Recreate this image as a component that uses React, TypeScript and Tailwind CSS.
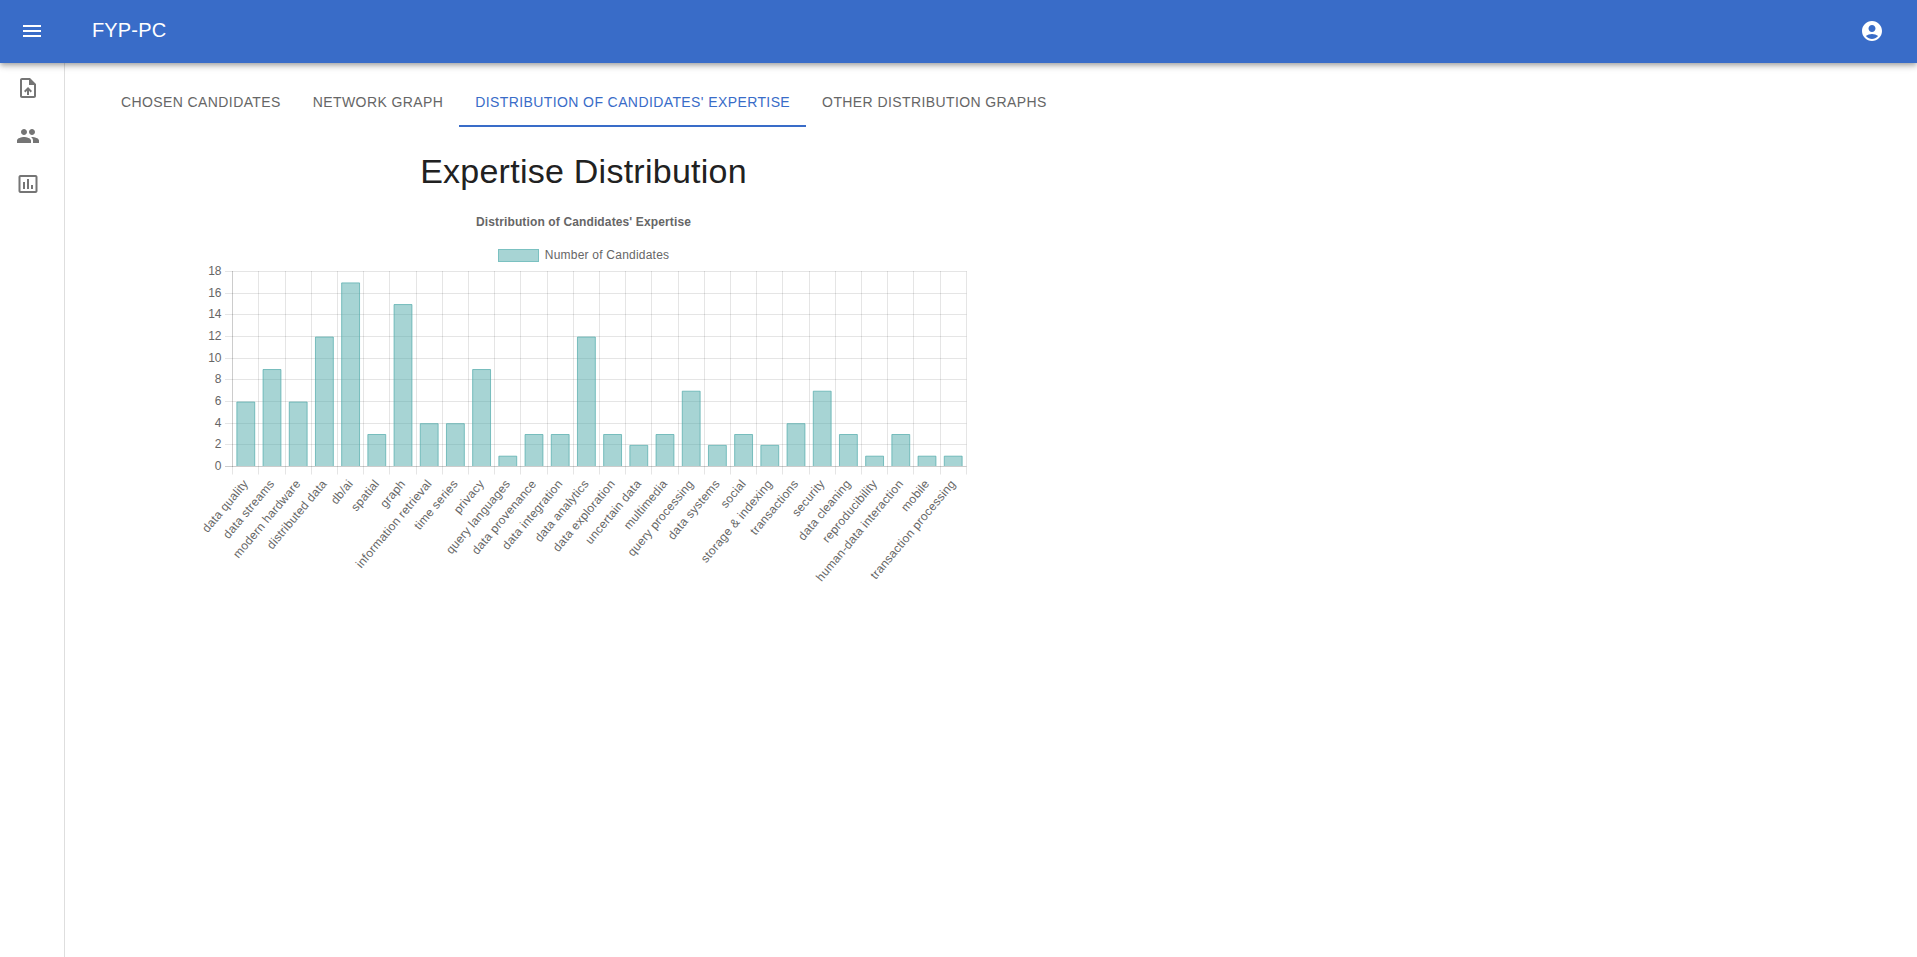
const ICONS = {
  menu: "M3 18h18v-2H3v2zm0-5h18v-2H3v2zm0-7v2h18V6H3z",
  account:
    "M12 2C6.48 2 2 6.48 2 12s4.48 10 10 10 10-4.48 10-10S17.52 2 12 2zm0 4c1.93 0 3.5 1.57 3.5 3.5S13.93 13 12 13s-3.5-1.57-3.5-3.5S10.07 6 12 6zm0 14c-2.03 0-4.43-.82-6.14-2.88C7.55 15.8 9.68 15 12 15s4.45.8 6.14 2.12C16.43 19.18 14.03 20 12 20z",
  upload:
    "M14 2H6c-1.1 0-1.99.9-1.99 2L4 20c0 1.1.89 2 1.99 2H18c1.1 0 2-.9 2-2V8l-6-6zm4 18H6V4h7v5h5v11zM8 15.01l1.41 1.41L11 14.84V19h2v-4.16l1.59 1.59L16 15.01 12.01 11z",
  people:
    "M16 11c1.66 0 2.99-1.34 2.99-3S17.66 5 16 5c-1.66 0-3 1.34-3 3s1.34 3 3 3zm-8 0c1.66 0 2.99-1.34 2.99-3S9.66 5 8 5C6.34 5 5 6.34 5 8s1.34 3 3 3zm0 2c-2.33 0-7 1.17-7 3.5V19h14v-2.5c0-2.33-4.67-3.5-7-3.5zm8 0c-.29 0-.62.02-.97.05 1.16.84 1.97 1.97 1.97 3.45V19h6v-2.5c0-2.33-4.67-3.5-7-3.5z",
  chart:
    "M9 17H7v-7h2v7zm4 0h-2V7h2v10zm4 0h-2v-4h2v4zm2.5 2.1h-15V5h15v14.1zm0-16.1h-15c-1.1 0-2 .9-2 2v14c0 1.1.9 2 2 2h15c1.1 0 2-.9 2-2V5c0-1.1-.9-2-2-2z",
};

function Icon({ name }: { name: keyof typeof ICONS }) {
  return (
    <svg className="size-6 shrink-0 fill-current" viewBox="0 0 24 24">
      <path d={ICONS[name]} />
    </svg>
  );
}

const DATA: [string, number][] = [
  ["data quality", 6],
  ["data streams", 9],
  ["modern hardware", 6],
  ["distributed data", 12],
  ["db/ai", 17],
  ["spatial", 3],
  ["graph", 15],
  ["information retrieval", 4],
  ["time series", 4],
  ["privacy", 9],
  ["query languages", 1],
  ["data provenance", 3],
  ["data integration", 3],
  ["data analytics", 12],
  ["data exploration", 3],
  ["uncertain data", 2],
  ["multimedia", 3],
  ["query processing", 7],
  ["data systems", 2],
  ["social", 3],
  ["storage & indexing", 2],
  ["transactions", 4],
  ["security", 7],
  ["data cleaning", 3],
  ["reproducibility", 1],
  ["human-data interaction", 3],
  ["mobile", 1],
  ["transaction processing", 1],
];

const LEFT = 52.7;
const STEP = 26.2;
const BOTTOM = 266.5;
const UNIT = 10.83;
const BAR = STEP * 0.72;
const snap = (v: number) => Math.floor(v) + 0.5;

function BarChart() {
  const right = snap(LEFT + STEP * DATA.length);
  return (
    <svg className="h-[400px] w-[807px]" viewBox="0 0 807 400" fontSize="12" fill="#666">
      <text x="403.5" y="26" textAnchor="middle" fontWeight="bold" letterSpacing="0.13">
        Distribution of Candidates' Expertise
      </text>
      <rect x="318.5" y="49.5" width="40" height="12" fill="#a7d4d4" stroke="#7bc1c1" />
      <text x="364.8" y="59" letterSpacing="0.22">
        Number of Candidates
      </text>
      {Array.from({ length: 10 }, (_, i) => {
        const y = snap(BOTTOM - i * 2 * UNIT);
        return (
          <g key={i}>
            <path d={`M45 ${y}H${right}`} stroke="#000" strokeOpacity={i ? 0.1 : 0.2} />
            <text x="41.5" y={y + 3.8} textAnchor="end">
              {i * 2}
            </text>
          </g>
        );
      })}
      {Array.from({ length: DATA.length + 1 }, (_, i) => (
        <g key={i} stroke="#000">
          <path d={`M${snap(LEFT + i * STEP)} 71V267`} strokeOpacity={i ? 0.1 : 0.2} />
          <path d={`M${snap(LEFT + i * STEP)} 267V274.5`} strokeOpacity="0.1" />
        </g>
      ))}
      {DATA.map(([label, value], i) => {
        const cx = LEFT + (i + 0.5) * STEP;
        const x0 = cx - BAR / 2 + 0.5;
        const x1 = cx + BAR / 2 - 0.5;
        const y = BOTTOM - value * UNIT + 0.5;
        return (
          <g key={label}>
            <path
              d={`M${x0} ${BOTTOM - 0.5}V${y}H${x1}V${BOTTOM - 0.5}`}
              fill="#50a9aa"
              fillOpacity="0.5"
              stroke="#50a9aa"
              strokeOpacity="0.7"
            />
            <text
              textAnchor="end"
              letterSpacing="0.24"
              transform={`translate(${cx} 281.5) rotate(-50)`}
              y="4"
            >
              {label}
            </text>
          </g>
        );
      })}
    </svg>
  );
}

const TABS = [
  "Chosen candidates",
  "Network graph",
  "Distribution of candidates' expertise",
  "Other distribution graphs",
];

export default function App() {
  return (
    <div className="flex h-screen flex-col overflow-hidden bg-white font-['Liberation_Sans',sans-serif] text-[#212121]">
      <header className="z-10 flex h-[63px] shrink-0 items-center bg-[#396cc8] pr-[33px] pb-px pl-5 text-white shadow-[0_2px_4px_-1px_rgba(0,0,0,0.2),0_4px_5px_0_rgba(0,0,0,0.14),0_1px_10px_0_rgba(0,0,0,0.12)]">
        <Icon name="menu" />
        <h1 className="ml-12 grow pb-0.5 text-xl tracking-[0.0075em]">FYP-PC</h1>
        <Icon name="account" />
      </header>
      <div className="flex grow">
        <nav className="flex w-[65px] flex-col gap-6 border-r border-[#dedede] pt-[13px] pl-4 text-[#757575]">
          <Icon name="upload" />
          <Icon name="people" />
          <Icon name="chart" />
        </nav>
        <main className="pt-4 pl-10">
          <div className="flex h-12 items-stretch text-sm tracking-[0.02857em] text-[#666] uppercase">
            {TABS.map((tab, i) => (
              <button
                key={tab}
                className={
                  i === 2
                    ? "border-b-2 border-[#396cc8] px-4 text-[#396cc8] uppercase"
                    : "border-b-2 border-transparent px-4 uppercase"
                }
              >
                {tab}
              </button>
            ))}
          </div>
          <section className="flex w-[807px] flex-col pt-[23px] pl-[75px]">
            <h2 className="w-[807px] text-center text-[34px] leading-[42px] tracking-[0.00735em]">
              Expertise Distribution
            </h2>
            <div className="mt-2">
              <BarChart />
            </div>
          </section>
        </main>
      </div>
    </div>
  );
}
